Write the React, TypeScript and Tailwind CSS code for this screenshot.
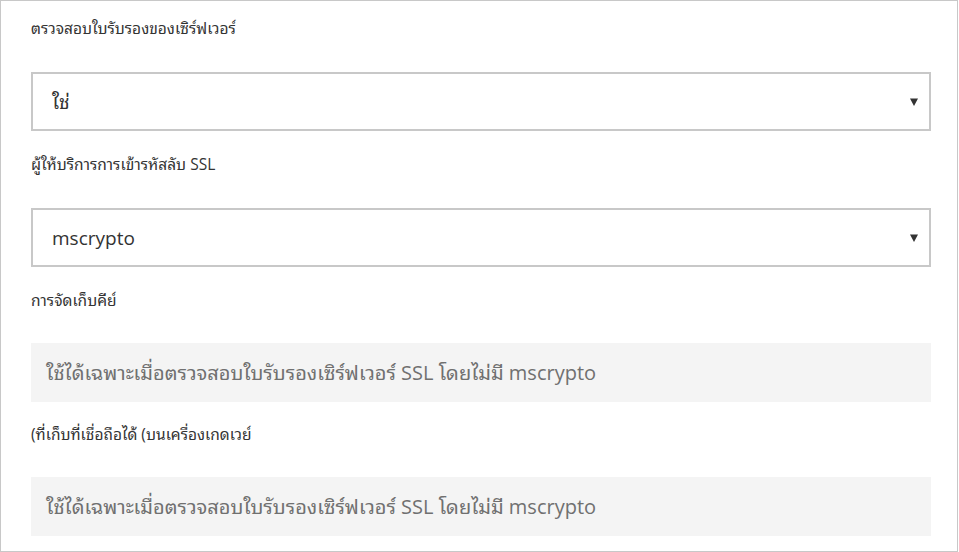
import React from "react";

const font = { fontFamily: '"Segoe UI", "Open Sans", "Noto Sans", "Noto Sans Thai Looped", "Noto Sans Thai", "Noto Sans CJK SC", sans-serif' };

function Label({ children, h }: { children: React.ReactNode; h: string }) {
  return <div className={`${h} flex items-start text-[15.5px] leading-[20px] text-[#333]`}>{children}</div>;
}

function Arrow() {
  return (
    <svg width="8" height="8" viewBox="0 0 8 8" className="block">
      <path d="M0 0.5 L8 0.5 L4 8 Z" fill="#333" />
    </svg>
  );
}

function Select({ value }: { value: string }) {
  return (
    <div className="flex h-[59px] items-center justify-between border-2 border-[#c8c8c8] bg-white pl-[19px] pr-[11px]">
      <span className="text-[19px] leading-[24px] text-[#333]">{value}</span>
      <Arrow />
    </div>
  );
}

function Disabled({ text }: { text: string }) {
  return (
    <div className="flex h-[59px] items-center bg-[#f4f4f4] pl-[15px]">
      <span className="text-[20px] leading-[26px] text-[#707070]">{text}</span>
    </div>
  );
}

export default function App() {
  return (
    <div style={font} className="h-[552px] w-[959px] bg-white">
      <div className="h-[552px] w-[958px] border border-[#c8c8c8] pl-[30px] pr-[26px]">
        <div className="pt-[17px]">
          <Label h="h-[54px]">ตรวจสอบใบรับรองของเซิร์ฟเวอร์</Label>
        </div>
        <Select value="ใช่" />
        <div className="pt-[23px]">
          <Label h="h-[54px]">ผู้ให้บริการการเข้ารหัสลับ SSL</Label>
        </div>
        <Select value="mscrypto" />
        <div className="pt-[23px]">
          <Label h="h-[53px]">การจัดเก็บคีย์</Label>
        </div>
        <Disabled text="ใช้ได้เฉพาะเมื่อตรวจสอบใบรับรองเซิร์ฟเวอร์ SSL โดยไม่มี mscrypto" />
        <div className="pt-[22px]">
          <Label h="h-[53px]">(ที่เก็บที่เชื่อถือได้ (บนเครื่องเกดเวย์</Label>
        </div>
        <Disabled text="ใช้ได้เฉพาะเมื่อตรวจสอบใบรับรองเซิร์ฟเวอร์ SSL โดยไม่มี mscrypto" />
      </div>
    </div>
  );
}
